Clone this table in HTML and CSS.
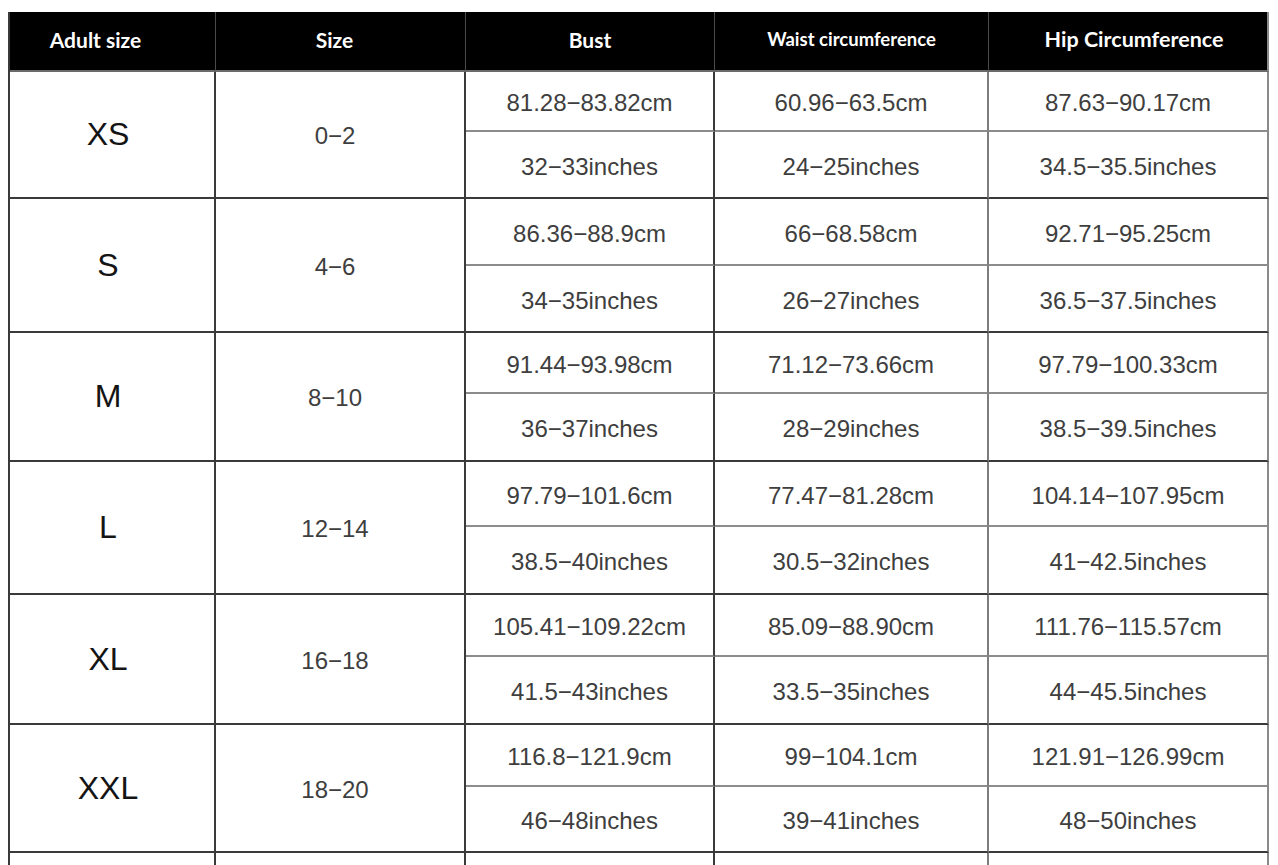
FILE: index.html
```html
<!DOCTYPE html>
<html lang="en">
<head>
<meta charset="utf-8">
<title>Size chart</title>
<link rel="stylesheet" href="styles.css">
</head>
<body>
<div class="chart">
  <div class="hd c1 h-adult">Adult size</div>
  <div class="hd c2 h-size">Size</div>
  <div class="hd c3">Bust</div>
  <div class="hd c4 small">Waist circumference</div>
  <div class="hd c5 h-hip">Hip Circumference</div>

  <div class="size c1">XS</div>
  <div class="range c2">0−2</div>
  <div class="val top c3">81.28−83.82cm</div>
  <div class="val top c4">60.96−63.5cm</div>
  <div class="val top c5">87.63−90.17cm</div>
  <div class="val bot c3">32−33inches</div>
  <div class="val bot c4">24−25inches</div>
  <div class="val bot c5">34.5−35.5inches</div>

  <div class="size c1">S</div>
  <div class="range c2">4−6</div>
  <div class="val top c3">86.36−88.9cm</div>
  <div class="val top c4">66−68.58cm</div>
  <div class="val top c5">92.71−95.25cm</div>
  <div class="val bot c3">34−35inches</div>
  <div class="val bot c4">26−27inches</div>
  <div class="val bot c5">36.5−37.5inches</div>

  <div class="size c1">M</div>
  <div class="range c2">8−10</div>
  <div class="val top c3">91.44−93.98cm</div>
  <div class="val top c4">71.12−73.66cm</div>
  <div class="val top c5">97.79−100.33cm</div>
  <div class="val bot c3">36−37inches</div>
  <div class="val bot c4">28−29inches</div>
  <div class="val bot c5">38.5−39.5inches</div>

  <div class="size c1">L</div>
  <div class="range c2">12−14</div>
  <div class="val top c3">97.79−101.6cm</div>
  <div class="val top c4">77.47−81.28cm</div>
  <div class="val top c5">104.14−107.95cm</div>
  <div class="val bot c3">38.5−40inches</div>
  <div class="val bot c4">30.5−32inches</div>
  <div class="val bot c5">41−42.5inches</div>

  <div class="size c1">XL</div>
  <div class="range c2">16−18</div>
  <div class="val top c3">105.41−109.22cm</div>
  <div class="val top c4">85.09−88.90cm</div>
  <div class="val top c5">111.76−115.57cm</div>
  <div class="val bot c3">41.5−43inches</div>
  <div class="val bot c4">33.5−35inches</div>
  <div class="val bot c5">44−45.5inches</div>

  <div class="size c1">XXL</div>
  <div class="range c2">18−20</div>
  <div class="val top c3">116.8−121.9cm</div>
  <div class="val top c4">99−104.1cm</div>
  <div class="val top c5">121.91−126.99cm</div>
  <div class="val bot c3">46−48inches</div>
  <div class="val bot c4">39−41inches</div>
  <div class="val bot c5">48−50inches</div>

  <div class="empty c1"></div>
  <div class="empty c2"></div>
  <div class="empty c3"></div>
  <div class="empty c4"></div>
  <div class="empty c5"></div>
</div>
</body>
</html>
```
FILE: styles.css
```css
html, body {
  margin: 0;
  padding: 0;
  background: #ffffff;
  overflow: hidden;
  height: 865px;
}

.chart {
  margin: 12px 0 0 8px;
  width: 1259px;
  display: grid;
  grid-template-columns: 206px 250px 249px 274px 280px;
  grid-template-rows: 60px 60px 67px 67px 67px 61px 68px 65px 68px 62px 68px 62px 66px 40px;
  border-left: 2px solid #3a3a3a;
  box-sizing: border-box;
  font-family: "Liberation Sans", Arial, sans-serif;
}

.chart > div {
  box-sizing: border-box;
  display: flex;
  align-items: center;
  justify-content: center;
  border-right: 2px solid #3a3a3a;
}

.c1 { grid-column: 1; }
.c2 { grid-column: 2; }
.c3 { grid-column: 3; }
.c4 { grid-column: 4; border-right-color: #7d7d7d !important; }
.c5 { grid-column: 5; border-right-color: #8a8a8a !important; }

.hd {
  background: #000;
  color: #fff;
  font-family: "Lato", "Open Sans", sans-serif;
  font-weight: 700;
  font-size: 21px;
  border-right: 1px solid #4a4a4a !important;
  border-bottom: 2px solid #6a6a6a;
  padding-bottom: 4px;
}

.hd.h-adult { padding-right: 34px; }
.hd.h-size { padding-right: 12px; }
.hd.h-hip { padding-left: 12px; font-size: 21.5px; }

.hd.small {
  font-size: 18.5px;
}

.hd.c5 {
  border-right: 2px solid #8a8a8a !important;
}

.size {
  grid-row: span 2;
  font-size: 32px;
  color: #141414;
  border-bottom: 2px solid #3a3a3a;
  padding-right: 8px;
}

.range {
  grid-row: span 2;
  font-size: 24px;
  color: #3e3e3e;
  border-bottom: 2px solid #3a3a3a;
  padding-top: 3px;
  padding-right: 10px;
}

.val {
  font-size: 24px;
  color: #3e3e3e;
  padding-top: 4px;
}

.val.top {
  border-bottom: 2px solid #8c8c8c;
}

.val.bot {
  border-bottom: 2px solid #3a3a3a;
}

.empty {
  height: 40px;
}
```
